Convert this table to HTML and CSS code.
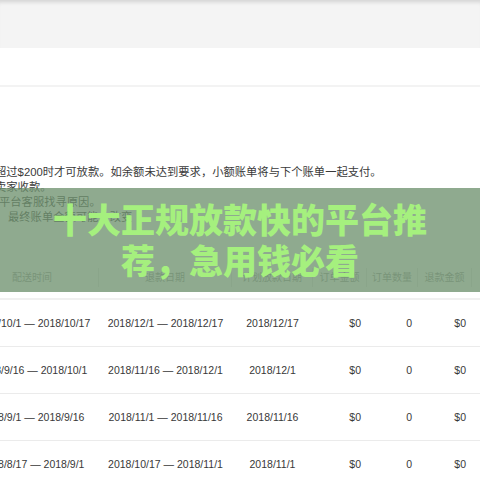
FILE: index.html
```html
<!DOCTYPE html>
<html lang="zh-CN">
<head>
<meta charset="utf-8">
<link rel="stylesheet" href="styles.css">
</head>
<body>
<div class="page">
  <div class="topbar"></div>
  <div class="subbar"></div>
  <div class="notes">
    <div class="note">超过$200时才可放款。如余额未达到要求，小额账单将与下个账单一起支付。</div>
    <div class="note">卖家收款。</div>
    <div class="note note-b">平台客服找寻原因。</div>
    <div class="note note-c">最终账单金额可能会改变</div>
  </div>
  <div class="table">
    <div class="row head">
      <div class="th">配送时间</div>
      <div class="th">退款日期</div>
      <div class="th">计划放款日期</div>
      <div class="th">订单金额</div>
      <div class="th">订单数量</div>
      <div class="th">退款金额</div>
      <div class="th th-last"></div>
    </div>
    <div class="row">
      <div class="td">2018/10/1 — 2018/10/17</div>
      <div class="td">2018/12/1 — 2018/12/17</div>
      <div class="td">2018/12/17</div>
      <div class="td num">$0</div>
      <div class="td num">0</div>
      <div class="td num">$0</div>
      <div class="td"></div>
    </div>
    <div class="row">
      <div class="td">2018/9/16 — 2018/10/1</div>
      <div class="td">2018/11/16 — 2018/12/1</div>
      <div class="td">2018/12/1</div>
      <div class="td num">$0</div>
      <div class="td num">0</div>
      <div class="td num">$0</div>
      <div class="td"></div>
    </div>
    <div class="row">
      <div class="td">2018/9/1 — 2018/9/16</div>
      <div class="td">2018/11/1 — 2018/11/16</div>
      <div class="td">2018/11/16</div>
      <div class="td num">$0</div>
      <div class="td num">0</div>
      <div class="td num">$0</div>
      <div class="td"></div>
    </div>
    <div class="row">
      <div class="td">2018/8/17 — 2018/9/1</div>
      <div class="td">2018/10/17 — 2018/11/1</div>
      <div class="td">2018/11/1</div>
      <div class="td num">$0</div>
      <div class="td num">0</div>
      <div class="td num">$0</div>
      <div class="td"></div>
    </div>
  </div>
  <div class="banner">
    <div class="banner-title">十大正规放款快的平台推荐，急用钱必看</div>
  </div>
</div>
</body>
</html>
```
FILE: styles.css
```css
html, body {
  margin: 0;
  padding: 0;
  background: #ffffff;
}
body {
  width: 480px;
  height: 480px;
  overflow: hidden;
  font-family: "Liberation Sans", "Noto Sans CJK SC", sans-serif;
  color: #333333;
}
.page {
  position: relative;
  width: 480px;
  height: 480px;
  overflow: hidden;
}
.topbar {
  height: 48px;
  background: #f4f4f4;
  box-shadow: inset 0 5px 4px -3px rgba(0, 0, 0, 0.14);
}
.subbar {
  height: 37px;
  background: #ffffff;
  border-bottom: 2px solid #f3f3f3;
}
.notes {
  margin-top: 78px;
  margin-left: -5px;
  font-size: 11.3px;
  line-height: 15px;
  color: #3a3a3a;
  white-space: nowrap;
}
.note-b {
  margin-left: 4px;
}
.note-c {
  margin-left: 13px;
}
.table {
  margin-top: 31px;
}
.row {
  display: grid;
  grid-template-columns: 133px 133px 81px 54px 51px 54px 40px;
  margin-left: -34px;
  height: 46px;
  align-items: center;
  border-bottom: 1px solid #ebebeb;
}
.row.head {
  height: 42px;
  border-bottom: 2px solid #f0f0f0;
}
.th {
  height: 19px;
  line-height: 19px;
  text-align: center;
  font-size: 10px;
  color: #9a9a9a;
  border-right: 1px solid #e6e6e6;
}
.th-last {
  border-right: none;
}
.td {
  text-align: center;
  font-size: 10.5px;
  color: #383838;
  white-space: nowrap;
}
.td.num {
  text-align: right;
  padding-right: 6px;
}
.banner {
  position: absolute;
  left: 0;
  top: 188px;
  width: 480px;
  height: 104px;
  background: rgba(112, 146, 112, 0.78);
  display: flex;
  justify-content: center;
}
.banner-title {
  width: 380px;
  padding-top: 10px;
  font-family: "Noto Sans CJK SC", sans-serif;
  font-weight: 900;
  font-size: 34px;
  line-height: 41px;
  text-align: center;
  color: #a5f07e;
}
```
